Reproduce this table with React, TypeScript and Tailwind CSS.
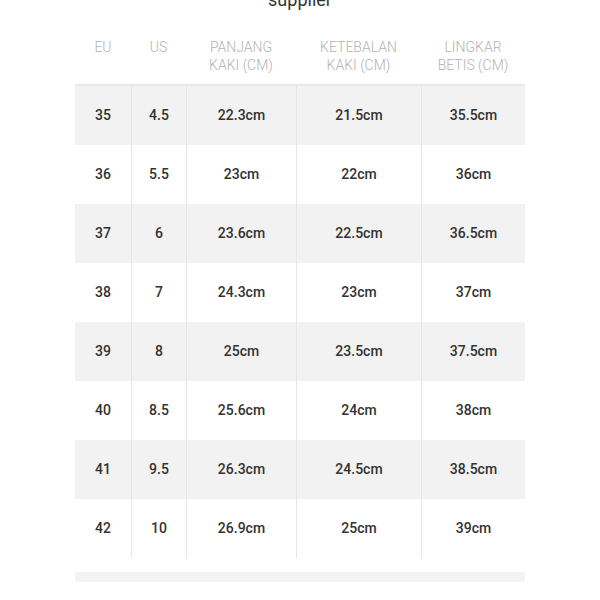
const rows = [
  ["35", "4.5", "22.3cm", "21.5cm", "35.5cm"],
  ["36", "5.5", "23cm", "22cm", "36cm"],
  ["37", "6", "23.6cm", "22.5cm", "36.5cm"],
  ["38", "7", "24.3cm", "23cm", "37cm"],
  ["39", "8", "25cm", "23.5cm", "37.5cm"],
  ["40", "8.5", "25.6cm", "24cm", "38cm"],
  ["41", "9.5", "26.3cm", "24.5cm", "38.5cm"],
  ["42", "10", "26.9cm", "25cm", "39cm"],
];

const headers = [["EU"], ["US"], ["PANJANG", "KAKI (CM)"], ["KETEBALAN", "KAKI (CM)"], ["LINGKAR", "BETIS (CM)"]];

const cols = "grid grid-cols-[56px_55px_110px_125px_104px]";

export default function App() {
  return (
    <div className="flex h-[600px] w-[600px] flex-col overflow-hidden bg-white font-['Roboto',sans-serif]">
      {/* Title, cut off at the top like the source */}
      <div className="flex h-[36px] shrink-0 flex-col items-center">
        <div className="mt-[-11px] text-[18px] leading-[22px] text-[#333]">supplier</div>
      </div>

      <div className="ml-[75px] w-[450px]">
        {/* Header */}
        <div className={`${cols} h-[50px] pt-[2px] border-b-2 border-[#e8e8e8]`}>
          {headers.map((h, i) => (
            <div key={i} className="text-center text-[14px] leading-[18px] font-light text-[#b3b3b3]">
              {h.map((line) => (
                <div key={line}>{line}</div>
              ))}
            </div>
          ))}
        </div>

        {/* Rows */}
        {rows.map((r, ri) => (
          <div key={r[0]} className={`${cols} h-[59px] ${ri % 2 === 0 ? "bg-[#f2f2f2]" : "bg-white"}`}>
            {r.map((v, ci) => (
              <div
                key={ci}
                className={`flex items-center justify-center text-[14px] font-medium text-[#333] ${ci > 0 ? "border-l border-[#e6e6e6]" : ""}`}
              >
                {v}
              </div>
            ))}
          </div>
        ))}

        <div className="mt-[14px] h-[10px] bg-[#f3f3f3]" />
      </div>
    </div>
  );
}
